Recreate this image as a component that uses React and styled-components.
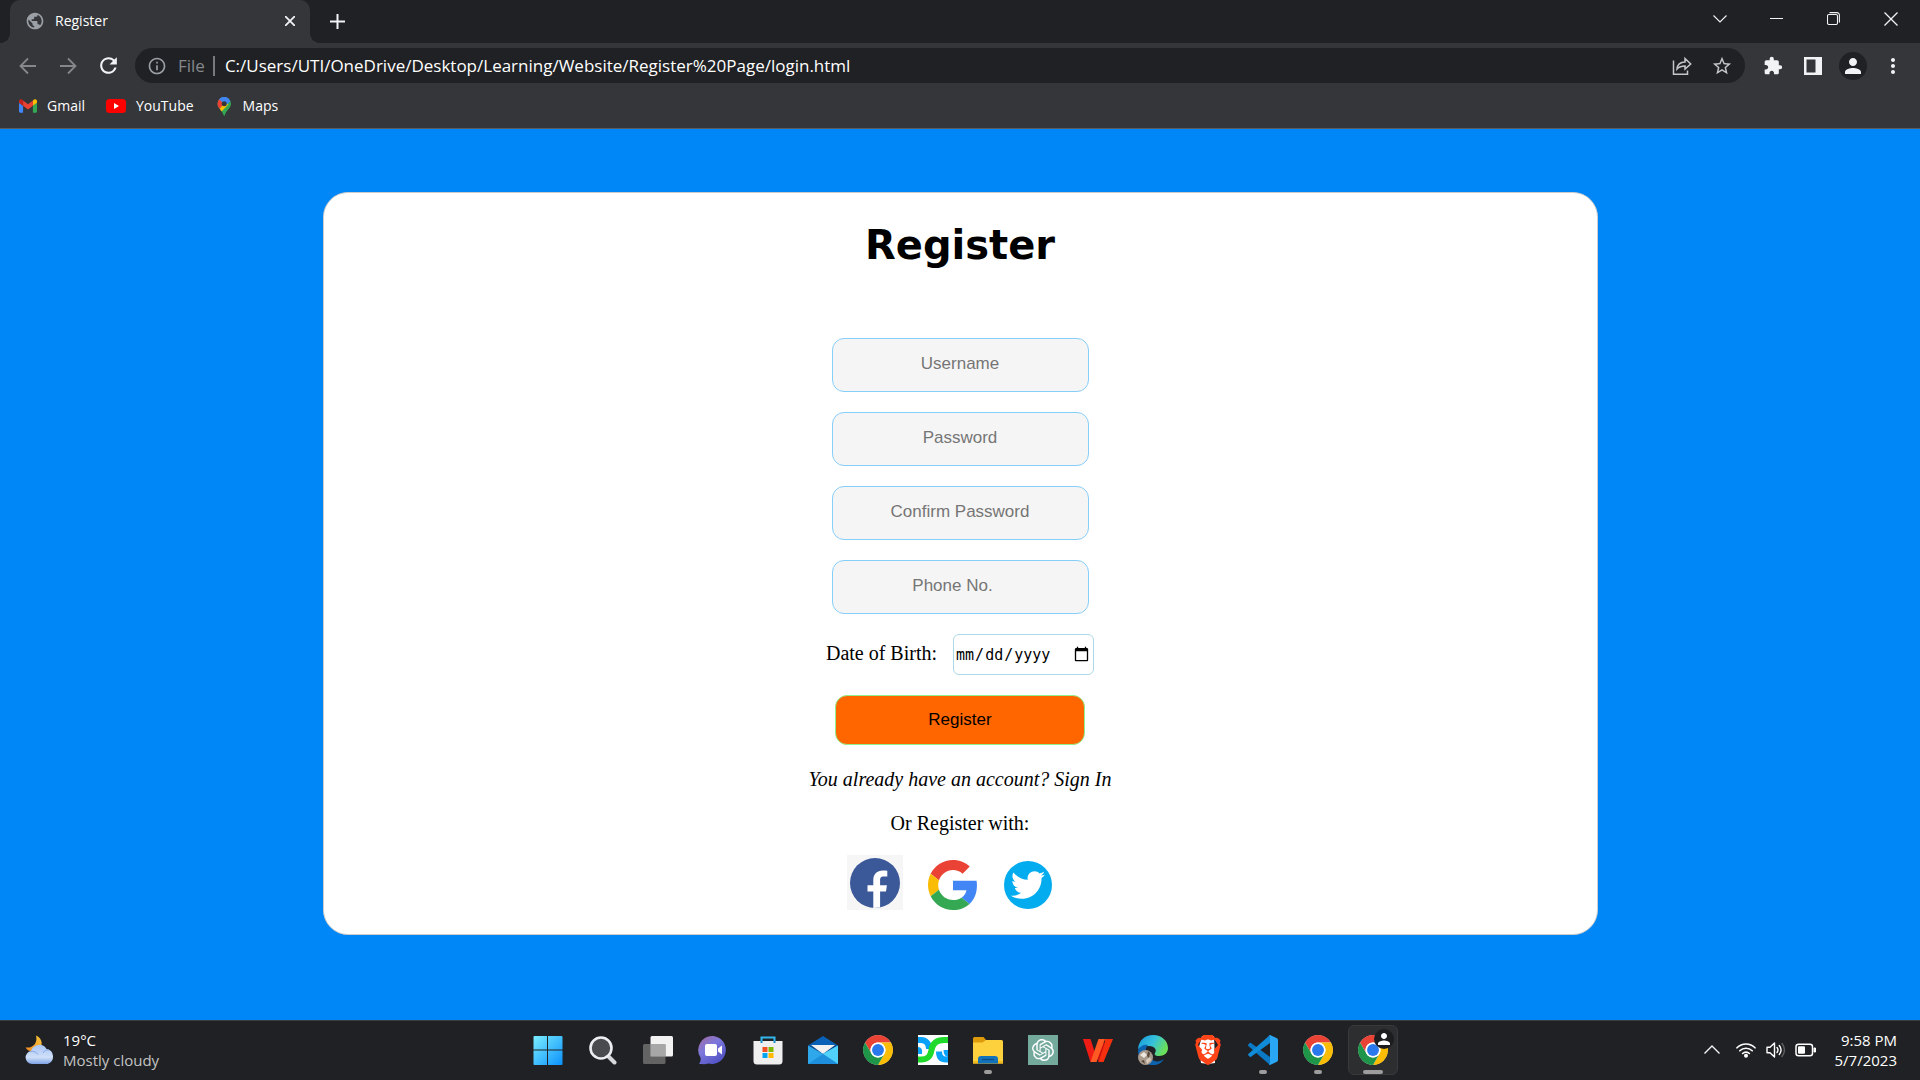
import React from "react";
import styled, { createGlobalStyle } from "styled-components";
import {
  MdPublic,
  MdInfoOutline,
  MdRefresh,
  MdStarBorder,
  MdExtension,
  MdPerson,
  MdMoreVert,
} from "react-icons/md";
import { SiOpenai, SiBrave } from "react-icons/si";
import { FaTwitter } from "react-icons/fa";

const GlobalStyle = createGlobalStyle`
  *, *::before, *::after { box-sizing: border-box; }
  body { margin: 0; background: #0087f7; }
  button { border: 0; padding: 0; background: none; color: inherit; font: inherit; }
  svg { display: block; flex: none; }
`;

const ui = `"Open Sans", "Noto Sans", sans-serif`;
const serif = `"Liberation Serif", "Times New Roman", serif`;
const sans = `"Liberation Sans", Arial, sans-serif`;

const Screen = styled.div`
  min-height: 100vh;
  display: flex;
  flex-direction: column;
  background: #0087f7;
`;

/* ---------- browser ---------- */

const Browser = styled.header`
  background: #35363a;
  color: #fff;
  font-family: ${ui};
  border-bottom: 1px solid #5b5c5f;
`;

const TabStrip = styled.div`
  display: flex;
  align-items: center;
  height: 43px;
  padding-left: 10px;
  background: #202124;
`;

const Tab = styled.div`
  position: relative;
  display: flex;
  align-items: center;
  gap: 10px;
  width: 300px;
  height: 43px;
  padding: 0 12px 2px 15px;
  border-radius: 10px 10px 0 0;
  background: #35363a;
  font-size: 14px;
  line-height: 20px;

  &::before,
  &::after {
    content: "";
    position: absolute;
    bottom: 0;
    width: 10px;
    height: 10px;
  }
  &::before {
    left: -10px;
    background: radial-gradient(circle at 0 0, transparent 10px, #35363a 10px);
  }
  &::after {
    right: -10px;
    background: radial-gradient(circle at 100% 0, transparent 10px, #35363a 10px);
  }
`;

const TabTitle = styled.span`
  flex: 1;
`;

const IconButton = styled.button`
  display: grid;
  place-items: center;
  width: ${(p) => p.$w || 40}px;
  height: ${(p) => p.$h || 35}px;
  color: ${(p) => p.$color || "#f1f3f4"};
`;

const WindowControls = styled.div`
  display: flex;
  margin-left: auto;
  height: 36px;
  align-self: flex-start;
`;

const Toolbar = styled.div`
  display: flex;
  align-items: center;
  height: 45px;
  padding: 0 7px 0 8px;
`;

const AddressBar = styled.div`
  flex: 1;
  display: flex;
  align-items: center;
  height: 35px;
  margin: 0 8px 0 7px;
  padding: 0 3px 0 12px;
  border-radius: 18px;
  background: #202124;
  color: #9aa0a6;
`;

const Scheme = styled.label`
  margin-left: 11px;
  padding-right: 8px;
  border-right: 2px solid #77797d;
  line-height: 20px;
  color: #85888c;
  font-size: 17px;
`;

const AddressInput = styled.input`
  flex: 1;
  min-width: 0;
  margin-left: 10px;
  padding: 0;
  border: 0;
  outline: 0;
  background: transparent;
  color: #fff;
  font-family: ${ui};
  font-size: 17px;
`;

const Avatar = styled.span`
  display: grid;
  place-items: center;
  width: 28px;
  height: 28px;
  border-radius: 50%;
  background: #202124;
`;

const Bookmarks = styled.nav`
  display: flex;
  align-items: center;
  gap: 21px;
  height: 40px;
  padding: 0 19px 4px;
`;

const Bookmark = styled.a`
  display: flex;
  align-items: center;
  gap: 10px;
  color: #fff;
  font-size: 14px;
  line-height: 20px;
  text-decoration: none;
`;

/* ---------- page ---------- */

const Page = styled.main`
  flex: 1;
  padding: 63px 24px;
`;

const Card = styled.section`
  display: flex;
  flex-direction: column;
  align-items: center;
  max-width: 1275px;
  margin: 0 auto;
  padding: 28px 24px 24px;
  border: 1px solid #ccc;
  border-radius: 25px;
  background: #fff;
  color: #000;
  font-family: ${serif};
  font-size: 20px;
  line-height: 24px;
`;

const Title = styled.h1`
  margin: 0 0 69px;
  font-family: "DejaVu Sans", Verdana, sans-serif;
  font-size: 40px;
  line-height: 48px;
  font-weight: bold;
`;

const Form = styled.form`
  display: flex;
  flex-direction: column;
  align-items: center;
  gap: 20px;
  margin-bottom: 22px;
`;

const Field = styled.input`
  width: 257px;
  height: 54px;
  padding: 0 0 2px;
  border: 1px solid #87cefa;
  border-radius: 12px;
  background: #f5f5f5;
  font-family: ${sans};
  font-size: 17px;
  text-align: center;
  &::placeholder { color: #757575; }
`;

const DateRow = styled.div`
  display: flex;
  align-items: baseline;
  gap: 16px;
`;

const DateInput = styled.input`
  width: 141px;
  height: 41px;
  padding: 0 1px;
  border: 1px solid #add8e6;
  border-radius: 6px;
  background: #fff;
  color: #000;
  font-family: "DejaVu Sans Mono", monospace;
  font-size: 15px;
  &::-webkit-calendar-picker-indicator { font-size: 17px; }
`;

const Submit = styled.button`
  width: 250px;
  height: 50px;
  border: 1px solid #90ee90;
  border-radius: 12px;
  background: #ff6600;
  color: #000;
  font-family: ${sans};
  font-size: 17px;
`;

const Note = styled.p`
  margin: 0 0 20px;
  font-style: ${(p) => (p.$italic ? "italic" : "normal")};
`;

const SignIn = styled.a`
  color: inherit;
  text-decoration: none;
`;

const Socials = styled.div`
  display: flex;
  align-items: flex-end;
  gap: 25px;
  padding-right: 20px;
`;

const SocialLink = styled.a`
  display: grid;
  place-items: center;
  width: ${(p) => (p.$tile ? 56 : 50)}px;
  height: ${(p) => (p.$tile ? 55 : 50)}px;
  background: ${(p) => (p.$tile ? "#f6f6f6" : "transparent")};
`;

const TwitterDisc = styled.span`
  display: grid;
  place-items: center;
  width: 48px;
  height: 48px;
  border-radius: 50%;
  background: #03acee;
  color: #fff;
`;

/* ---------- taskbar ---------- */

const Taskbar = styled.footer`
  display: grid;
  grid-template-columns: 1fr auto 1fr;
  align-items: center;
  height: 60px;
  padding-bottom: 2px;
  border-top: 1px solid #3c3d3f;
  background: #202124;
  color: #fff;
  font-family: ${ui};
  font-size: 15px;
  line-height: 20px;
`;

const Weather = styled.button`
  display: flex;
  align-items: center;
  justify-self: start;
  gap: 8px;
  padding-left: 25px;
  text-align: left;
`;

const Line = styled.span`
  display: block;
  color: ${(p) => (p.$dim ? "#c3c3c3" : "#fff")};
`;

const Apps = styled.div`
  display: flex;
  gap: 5px;
`;

const AppButton = styled.button`
  position: relative;
  display: grid;
  place-items: center;
  width: 50px;
  height: 50px;
  border: 1px solid ${(p) => (p.$state === "active" ? "#38393b" : "transparent")};
  border-radius: 6px;
  background: ${(p) => (p.$state === "active" ? "#2d2e30" : "transparent")};

  &::after {
    content: "";
    display: ${(p) => (p.$state ? "block" : "none")};
    position: absolute;
    bottom: 0;
    left: 50%;
    width: ${(p) => (p.$state === "active" ? 20 : 8)}px;
    height: 4px;
    border-radius: 2px;
    background: #9d9d9e;
    transform: translateX(-50%);
  }
`;

const AppTile = styled.span`
  display: grid;
  place-items: center;
  width: 30px;
  height: 30px;
  background: #74aa9c;
  color: #fff;
`;

const Badge = styled.span`
  position: absolute;
  top: 3px;
  right: 3px;
  display: grid;
  place-items: center;
  width: 20px;
  height: 20px;
  border-radius: 50%;
  background: #1c1d1f;
`;

const Tray = styled.div`
  display: flex;
  align-items: center;
  justify-self: end;
  padding-right: 23px;
`;

const Clock = styled.time`
  margin-left: 14px;
  text-align: right;
`;

/* ---------- drawings ---------- */

const Stroke = ({ w = 20, h = w, d, sw = 1.3 }) => (
  <svg width={w} height={h} viewBox={`0 0 ${w} ${h}`} fill="none" stroke="currentColor" strokeWidth={sw}>
    <path d={d} />
  </svg>
);

const GmailIcon = () => (
  <svg width="18" height="14" viewBox="52 42 88 66">
    <path fill="#4285f4" d="M58 108h14V74L52 59v43c0 3.32 2.69 6 6 6" />
    <path fill="#34a853" d="M120 108h14c3.32 0 6-2.69 6-6V59l-20 15" />
    <path fill="#fbbc04" d="M120 48v26l20-15v-8c0-7.42-8.47-11.65-14.4-7.2" />
    <path fill="#ea4335" d="M72 74V48l24 18 24-18v26L96 92" />
    <path fill="#c5221f" d="M52 51v8l20 15V48l-5.6-4.2c-5.94-4.45-14.4-.22-14.4 7.2" />
  </svg>
);

const YouTubeIcon = () => (
  <svg width="20" height="14" viewBox="0 0 20 14">
    <rect width="20" height="14" rx="3.5" fill="#f00" />
    <path d="M8 4l5 3-5 3z" fill="#fff" />
  </svg>
);

const MapsIcon = () => (
  <svg width="18" height="19" viewBox="-2.2 0 18 19">
    <defs>
      <clipPath id="pin">
        <path d="M7 0a6.8 6.8 0 0 1 6.8 6.8c0 4.4-4.4 5.600-6.100 11.300-.2.900-1.200.900-1.400 0C4.600 12.400.200 11.200.200 6.800A6.800 6.800 0 0 1 7 0z" />
      </clipPath>
    </defs>
    <g clipPath="url(#pin)">
      <rect width="14" height="19" fill="#34a853" />
      <path d="M0 0h14L5 9z" fill="#4285f4" />
      <path d="M0 0l2 2 5 5-6 7-3-5z" fill="#ea4335" />
      <path d="M1.500 13L8.500 4.500 11 7.500 4 15z" fill="#fbbc04" />
      <path d="M2 2.300A6.800 6.800 0 0 1 13.500 4L9 8 7 6.800z" fill="#4285f4" />
    </g>
    <circle cx="7" cy="6.700" r="2.500" fill="#35363a" />
  </svg>
);

const ShareIcon = () => (
  <svg width="20" height="20" viewBox="0 0 20 20" fill="none" stroke="#c4c6c8" strokeWidth="1.500">
    <path d="M1.500 4.500v13.700h14V14.500" />
    <path d="M5 13c.4-4.500 3.200-6.900 8-7V2.500L18.700 8 13 13V10c-3.600 0-6 .8-8 3z" />
  </svg>
);

const FacebookIcon = () => (
  <svg width="50" height="50" viewBox="0 0 50 50">
    <circle cx="25" cy="25" r="25" fill="#3b5998" />
    <path fill="#fff" d="M23.300 50V33.600h-5.800v-6.400h5.800v-4.800c0-6.500 3.800-9.900 9.500-9.900 2 0 3.600.1 4.500.3v5.800h-3.500c-3 0-3.700 1.500-3.700 3.800v4.800h6.800l-.9 6.400h-5.900V49.500z" />
  </svg>
);

const GoogleIcon = () => (
  <svg width="50" height="50" viewBox="0 0 48 48">
    <path fill="#ea4335" d="M24 9.500c3.540 0 6.710 1.220 9.210 3.600l6.850-6.850C35.900 2.380 30.470 0 24 0 14.620 0 6.510 5.380 2.560 13.220l7.980 6.190C12.430 13.720 17.740 9.500 24 9.500z" />
    <path fill="#4285f4" d="M46.980 24.550c0-1.570-.15-3.090-.38-4.550H24v9.020h12.940c-.58 2.960-2.260 5.480-4.780 7.180l7.730 6c4.510-4.180 7.090-10.360 7.090-17.650z" />
    <path fill="#fbbc05" d="M10.530 28.590c-.48-1.450-.76-2.990-.76-4.590s.27-3.140.76-4.590l-7.980-6.190C.92 16.460 0 20.120 0 24c0 3.880.92 7.540 2.560 10.780l7.970-6.190z" />
    <path fill="#34a853" d="M24 48c6.480 0 11.930-2.130 15.890-5.810l-7.730-6c-2.150 1.450-4.920 2.300-8.160 2.300-6.260 0-11.570-4.220-13.470-9.910l-7.980 6.190C6.510 42.620 14.620 48 24 48z" />
  </svg>
);

const WeatherIcon = () => (
  <svg width="30" height="30" viewBox="0 0 30 30">
    <defs>
      <linearGradient id="cloud" x2="0" y2="1">
        <stop offset="0" stopColor="#a9c5f5" />
        <stop offset=".65" stopColor="#cfdff8" />
        <stop offset="1" stopColor="#7ea2e6" />
      </linearGradient>
      <linearGradient id="moon" x1="1" x2="0" y2="1">
        <stop offset="0" stopColor="#f8c63c" />
        <stop offset="1" stopColor="#f08a24" />
      </linearGradient>
    </defs>
    <path d="M11 .5c7 3 7.500 11 2 14.500-4.500 3-10 1.500-12.500-2.500C8 13.500 13 8 11 .500z" fill="url(#moon)" />
    <path d="M7 29a6.500 6.500 0 0 1-1-12.900A8.500 8.500 0 0 1 21.500 14 7.700 7.700 0 0 1 22.500 29z" fill="url(#cloud)" />
    <path d="M5.500 16.500c3-.5 6 .5 7.500 3M18 18c1.500-2.500 3.500-3.500 6-3" stroke="#86a8e8" fill="none" />
  </svg>
);

const WindowsIcon = () => (
  <svg width="30" height="30" viewBox="0 0 30 30">
    <defs>
      <linearGradient id="win" x2="30" y2="30" gradientUnits="userSpaceOnUse" x1="0" y1="0">
        <stop offset="0" stopColor="#7df0ff" />
        <stop offset="1" stopColor="#0a90fb" />
      </linearGradient>
    </defs>
    <path fill="url(#win)" d="M1.500 1H14v13.500H0.500V2a1 1 0 0 1 1-1zM15 1H28.500A1 1 0 0 1 29.500 2v12.500H15zM.500 15.500H14V30H1.500a1 1 0 0 1-1-1zm14.500 0H29.500V29a1 1 0 0 1-1 1H15z" />
  </svg>
);

const SearchIcon = () => (
  <svg width="30" height="30" viewBox="0 0 30 30">
    <path d="M20 21l6.500 6.500" stroke="#d5d7da" strokeWidth="4" strokeLinecap="round" />
    <circle cx="13" cy="13" r="10.500" fill="#4a4b4e" stroke="#eceef0" strokeWidth="2.600" />
  </svg>
);

const TaskViewIcon = () => (
  <svg width="30" height="30" viewBox="0 0 30 30">
    <rect x="7.500" y="1" width="22.500" height="20.500" rx="1.500" fill="#f2f2f2" />
    <rect x="0" y="9" width="22.500" height="20" rx="1.500" fill="#6c6c6c" fillOpacity=".88" />
    <path d="M7.500 9h15v12.500h-15z" fill="#a7a7a7" />
  </svg>
);

const ChatIcon = () => (
  <svg width="30" height="30" viewBox="0 0 30 30">
    <defs>
      <linearGradient id="chat" x1="0" x2=".7" y2="1">
        <stop offset="0" stopColor="#a56a9e" />
        <stop offset=".45" stopColor="#7d78dc" />
        <stop offset="1" stopColor="#4f50c4" />
      </linearGradient>
    </defs>
    <path d="M15.500 1a14 14 0 1 1-5 27.500c-3 1-6 .5-9.500.5 1.500-2 2-4 1.500-6.500A14 14 0 0 1 15.500 1z" fill="url(#chat)" />
    <rect x="7" y="9" width="12" height="12" rx="2" fill="#fff" />
    <path d="M20 13.500l4-3v9l-4-3z" fill="#fff" />
  </svg>
);

const StoreIcon = () => (
  <svg width="30" height="30" viewBox="0 0 30 30">
    <path d="M8.500 8V2.500h13V8" fill="none" stroke="#32b8ec" strokeWidth="2" />
    <path d="M.500 6h29v20a3.500 3.500 0 0 1-3.500 3.500H4A3.500 3.500 0 0 1 .500 26z" fill="#efefef" />
    <path d="M8.500 8V6M21.500 8V6" stroke="#1a8dcc" strokeWidth="2" />
    <path d="M9.500 12h5v5h-5z" fill="#f25022" />
    <path d="M15.500 12h5v5h-5z" fill="#7fba00" />
    <path d="M9.500 18h5v5h-5z" fill="#00a4ef" />
    <path d="M15.500 18h5v5h-5z" fill="#ffb900" />
  </svg>
);

const MailIcon = () => (
  <svg width="30" height="30" viewBox="0 0 30 30">
    <path d="M15 1l15 9.500H0z" fill="#0a62b8" />
    <path d="M0 10h30v3L15 22 0 13z" fill="#0d4d91" />
    <path d="M3 10h24L15 19z" fill="#f1f1f1" />
    <path d="M0 10.500L15 19 30 10.500V29H0z" fill="#2ea8ea" />
    <path d="M30 10.500V29L15 19z" fill="#50d2fa" />
    <path d="M0 29h30L15 19z" fill="#1d8fdd" />
  </svg>
);

const ChromeIcon = () => (
  <svg width="30" height="30" viewBox="0 0 48 48">
    <circle cx="24" cy="24" r="23.500" fill="#fff" />
    <path fill="#ea4335" d="M3.220 12A24 24 0 0 1 44.780 12H24a12 12 0 0 0-10.400 18z" />
    <path fill="#fbbc04" d="M44.780 12A24 24 0 0 1 24 48l10.400-18A12 12 0 0 0 24 12z" />
    <path fill="#1e9548" d="M24 48A24 24 0 0 1 3.220 12L13.600 30a12 12 0 0 0 20.800 0z" />
    <circle cx="24" cy="24" r="12" fill="#fff" />
    <circle cx="24" cy="24" r="9.500" fill="#2979ec" />
  </svg>
);

const DgIcon = () => (
  <svg width="30" height="30" viewBox="0 0 30 30">
    <rect width="30" height="30" fill="#fff" />
    <path d="M0 5h3c5 0 8 3.500 8 9" fill="none" stroke="#0aa2f8" strokeWidth="6" />
    <path d="M0 12q5 0 4 7H0z" fill="#0aa2f8" />
    <path d="M30 24.500h-2c-5 0-7-3-7-8" fill="none" stroke="#0aa2f8" strokeWidth="6" />
    <path d="M25.500 15H30v7q-4.500-1-4.500-7z" fill="#0aa2f8" />
    <path d="M0 24.500h3c7 0 9.500-3.500 10.500-9.500C14.500 8.500 18 5 26 5h4" fill="none" stroke="#1fd92b" strokeWidth="6" />
  </svg>
);

const FolderIcon = () => (
  <svg width="30" height="30" viewBox="0 0 30 30">
    <path d="M0 3.500A1.500 1.500 0 0 1 1.500 2h9L13 5v5H0z" fill="#dd9b0b" />
    <path d="M0 7.500h9.500L13 5h15.500A1.500 1.500 0 0 1 30 6.500V28.500H0z" fill="#fdd13e" />
    <path d="M0 26h30v2.500H0z" fill="#f3b91c" />
    <path d="M5 28.500V24a3 3 0 0 1 3-3h14a3 3 0 0 1 3 3v4.500z" fill="#1272ba" />
    <path d="M9 24.500h12" stroke="#0c4c84" strokeWidth="1.200" />
  </svg>
);

const WpsIcon = () => (
  <svg width="30" height="30" viewBox="0 0 30 30">
    <path d="M17 8h5l-1.500 19h-5l-2.500-8z" fill="#c90e10" />
    <path d="M22 4h8L20.500 27h-5L21.500 9z" fill="#f5300f" />
    <path d="M0 4h7.500L14 24l-1 3H7.500z" fill="#ee1c14" />
    <path d="M15.500 4H22l-8.500 23h-6z" fill="#ff5a24" />
  </svg>
);

const EdgeIcon = () => (
  <svg width="30" height="30" viewBox="0 0 30 30">
    <defs>
      <linearGradient id="edge" x2="1" y2=".4">
        <stop offset="0" stopColor="#1696dc" />
        <stop offset=".55" stopColor="#35c1dc" />
        <stop offset="1" stopColor="#6ae05c" />
      </linearGradient>
    </defs>
    <path d="M0 14C1 5 7 0 15 0c9 0 15 6 15 13 0 5-4 8-9 8-4 0-5-1.500-4-3 2-3 0-7-6-7-5 0-9 2-11 3z" fill="url(#edge)" />
    <path d="M0 15c2-4 6-6 10-5-3 3-3 8 1 12 4 5 10 6 15 2-5 8-14 7-18 4-5-2-8-7-8-13z" fill="#0d62b0" />
    <circle cx="7.500" cy="22.500" r="7.500" fill="#a89a8c" />
    <path d="M2 20l4-3 3 3-3 3z" fill="#eee7df" />
    <path d="M8 25l4-3 1 3-4 4z" fill="#d8cbbd" />
    <path d="M10 16l2 2-1 5-2-2zM3 26l3-1 1 4z" fill="#59483a" />
  </svg>
);

const VsCodeIcon = () => (
  <svg width="30" height="30" viewBox="0 0 30 30">
    <path d="M1.500 8.200L.300 9.500c-.4.400-.4 1 0 1.400L22 30V22L3 8c-.5-.3-1-.2-1.500.2z" fill="#0b79c4" />
    <path d="M1.500 21.500L.300 20.300c-.4-.4-.4-1 0-1.400L22 0v8L3 21.700c-.5.300-1 .3-1.500-.2z" fill="#0f8bd8" />
    <path d="M22 0l7 3.300c.6.300 1 .9 1 1.600v20.200c0 .7-.4 1.300-1 1.600L22 30c-.5 0-.8-.2-1-.5l1-1.500V2l-1-1.500c.2-.3.500-.500 1-.5z" fill="#2aa7f4" />
  </svg>
);

const BraveIcon = () => (
  <svg width="26" height="30" viewBox="0 0 26 30">
    <path d="M7 1h12l1 27-7 1-7-1-2-16z" fill="#fff" />
    <svg x="-2" y="0" width="30" height="30" viewBox="0 0 24 24">
      <SiBrave size={24} color="#ff4518" />
    </svg>
  </svg>
);

const WifiIcon = () => (
  <svg width="20" height="16" viewBox="0 0 20 16" fill="none" stroke="#fff" strokeWidth="1.600" strokeLinecap="round">
    <path d="M1 5.800a12.500 12.500 0 0 1 18 0M3.800 8.800a8.700 8.700 0 0 1 12.400 0M6.600 11.500a4.800 4.800 0 0 1 6.800 0" />
    <circle cx="10" cy="13.800" r="1.200" fill="#fff" />
  </svg>
);

const SpeakerIcon = () => (
  <svg width="20" height="18" viewBox="0 0 20 18" fill="none" stroke="#fff" strokeWidth="1.400" strokeLinejoin="round" strokeLinecap="round">
    <path d="M1 6.200h3L8.500 2v14L4 11.800H1z" />
    <path d="M11 6.500q2 2.500 0 5M13.300 4.500q3.600 4.500 0 9" />
    <path d="M16 2.500q5 6.500 0 13" stroke="#5f6062" />
  </svg>
);

const BatteryIcon = () => (
  <svg width="21" height="14" viewBox="0 0 21 14">
    <rect x="1" y="1.200" width="16.500" height="11.600" rx="2.500" fill="none" stroke="#fff" strokeWidth="1.500" />
    <rect x="3" y="3.200" width="7" height="7.600" rx="1" fill="#fff" />
    <path d="M19 5v4h1.500V5z" stroke="#fff" fill="#fff" />
  </svg>
);

const apps = [
  { name: "Start", icon: <WindowsIcon /> },
  { name: "Search", icon: <SearchIcon /> },
  { name: "Task view", icon: <TaskViewIcon /> },
  { name: "Chat", icon: <ChatIcon /> },
  { name: "Microsoft Store", icon: <StoreIcon /> },
  { name: "Mail", icon: <MailIcon /> },
  { name: "Chrome", icon: <ChromeIcon /> },
  { name: "DG", icon: <DgIcon /> },
  { name: "File Explorer", icon: <FolderIcon />, state: "open" },
  { name: "ChatGPT", icon: <AppTile><SiOpenai size={22} /></AppTile> },
  { name: "WPS Office", icon: <WpsIcon /> },
  { name: "Edge", icon: <EdgeIcon /> },
  { name: "Brave", icon: <BraveIcon /> },
  { name: "Visual Studio Code", icon: <VsCodeIcon />, state: "open" },
  { name: "Chrome window", icon: <ChromeIcon />, state: "open" },
  {
    name: "Chrome profile",
    icon: (
      <>
        <ChromeIcon />
        <Badge><MdPerson size={18} /></Badge>
      </>
    ),
    state: "active",
  },
];

const bookmarks = [
  { name: "Gmail", icon: <GmailIcon /> },
  { name: "YouTube", icon: <YouTubeIcon /> },
  { name: "Maps", icon: <MapsIcon /> },
];

const fields = [
  { type: "text", label: "Username" },
  { type: "password", label: "Password" },
  { type: "password", label: "Confirm Password" },
  { type: "number", label: "Phone No." },
];

export default function App() {
  return (
    <Screen>
      <GlobalStyle />
      <Browser>
        <TabStrip>
          <Tab>
            <MdPublic size={20} color="#9aa0a6" />
            <TabTitle>Register</TabTitle>
            <IconButton $w={16} $h={20} aria-label="Close tab">
              <Stroke w={10} d="M0 0l10 10M10 0L0 10" sw={1.8} />
            </IconButton>
          </Tab>
          <IconButton $w={54} aria-label="New tab">
            <Stroke w={15} d="M7.500 0v15M0 7.500h15" sw={2} />
          </IconButton>
          <WindowControls>
            <IconButton $w={57} $h={37} aria-label="Search tabs">
              <Stroke w={14} h={8} d="M.500.500L7 7 13.500.500" sw={1.1} />
            </IconButton>
            <IconButton $w={57} $h={37} aria-label="Minimize">
              <Stroke w={13} h={2} d="M0 .500h13" sw={1} />
            </IconButton>
            <IconButton $w={57} $h={37} aria-label="Restore">
              <Stroke w={13} d="M2.500.600H10A2.400 2.400 0 0 1 12.400 3v7.500M2 2.500h7A1.500 1.500 0 0 1 10.500 4v7A1.500 1.500 0 0 1 9 12.500H2A1.500 1.500 0 0 1 .500 11V4A1.500 1.500 0 0 1 2 2.500z" sw={1.1} />
            </IconButton>
            <IconButton $w={58} $h={37} aria-label="Close window">
              <Stroke w={14} d="M.500.500l13 13M13.500.500l-13 13" sw={1.3} />
            </IconButton>
          </WindowControls>
        </TabStrip>

        <Toolbar>
          <IconButton $color="#85878a" aria-label="Back">
            <Stroke w={18} d="M17 9H2M9 1.500L1.500 9 9 16.500" sw={1.8} />
          </IconButton>
          <IconButton $color="#85878a" aria-label="Forward">
            <Stroke w={18} d="M1 9h15M9 1.500L16.500 9 9 16.500" sw={1.8} />
          </IconButton>
          <IconButton aria-label="Reload">
            <MdRefresh size={25} />
          </IconButton>
          <AddressBar>
            <MdInfoOutline size={20} />
            <Scheme htmlFor="address">File</Scheme>
            <AddressInput
              id="address"
              defaultValue="C:/Users/UTI/OneDrive/Desktop/Learning/Website/Register%20Page/login.html"
            />
            <IconButton aria-label="Share"><ShareIcon /></IconButton>
            <IconButton $color="#c4c6c8" aria-label="Bookmark this page"><MdStarBorder size={22} /></IconButton>
          </AddressBar>
          <IconButton aria-label="Extensions"><MdExtension size={20} /></IconButton>
          <IconButton aria-label="Side panel">
            <svg width="18" height="18" viewBox="0 0 18 18">
              <path fillRule="evenodd" fill="#f1f3f4" d="M0 0h18v18H0zM2.500 2.500v13H11.500v-13z" />
            </svg>
          </IconButton>
          <IconButton aria-label="Profile"><Avatar><MdPerson size={24} /></Avatar></IconButton>
          <IconButton aria-label="Menu"><MdMoreVert size={24} /></IconButton>
        </Toolbar>

        <Bookmarks>
          {bookmarks.map((b) => (
            <Bookmark key={b.name} href="#">
              {b.icon}
              {b.name}
            </Bookmark>
          ))}
        </Bookmarks>
      </Browser>

      <Page>
        <Card>
          <Title>Register</Title>
          <Form onSubmit={(e) => e.preventDefault()}>
            {fields.map((f) => (
              <Field key={f.label} type={f.type} placeholder={f.label} aria-label={f.label} />
            ))}
            <DateRow>
              <label htmlFor="dob">Date of Birth:</label>
              <DateInput id="dob" type="date" />
            </DateRow>
            <Submit type="submit">Register</Submit>
          </Form>
          <Note $italic>
            You already have an account? <SignIn href="#">Sign In</SignIn>
          </Note>
          <Note>Or Register with:</Note>
          <Socials>
            <SocialLink href="#" aria-label="Facebook" $tile><FacebookIcon /></SocialLink>
            <SocialLink href="#" aria-label="Google"><GoogleIcon /></SocialLink>
            <SocialLink href="#" aria-label="Twitter">
              <TwitterDisc><FaTwitter size={34} /></TwitterDisc>
            </SocialLink>
          </Socials>
        </Card>
      </Page>

      <Taskbar>
        <Weather>
          <WeatherIcon />
          <span>
            <Line>19°C</Line>
            <Line $dim>Mostly cloudy</Line>
          </span>
        </Weather>
        <Apps>
          {apps.map((a) => (
            <AppButton key={a.name} aria-label={a.name} $state={a.state}>
              {a.icon}
            </AppButton>
          ))}
        </Apps>
        <Tray>
          <IconButton $w={38} aria-label="Show hidden icons">
            <Stroke w={16} h={9} d="M.500 8.500L8 1l7.500 7.500" sw={1.4} />
          </IconButton>
          <IconButton $w={30} aria-label="Network"><WifiIcon /></IconButton>
          <IconButton $w={30} aria-label="Volume"><SpeakerIcon /></IconButton>
          <IconButton $w={30} aria-label="Battery"><BatteryIcon /></IconButton>
          <Clock>
            <Line>9:58 PM</Line>
            <Line>5/7/2023</Line>
          </Clock>
        </Tray>
      </Taskbar>
    </Screen>
  );
}
